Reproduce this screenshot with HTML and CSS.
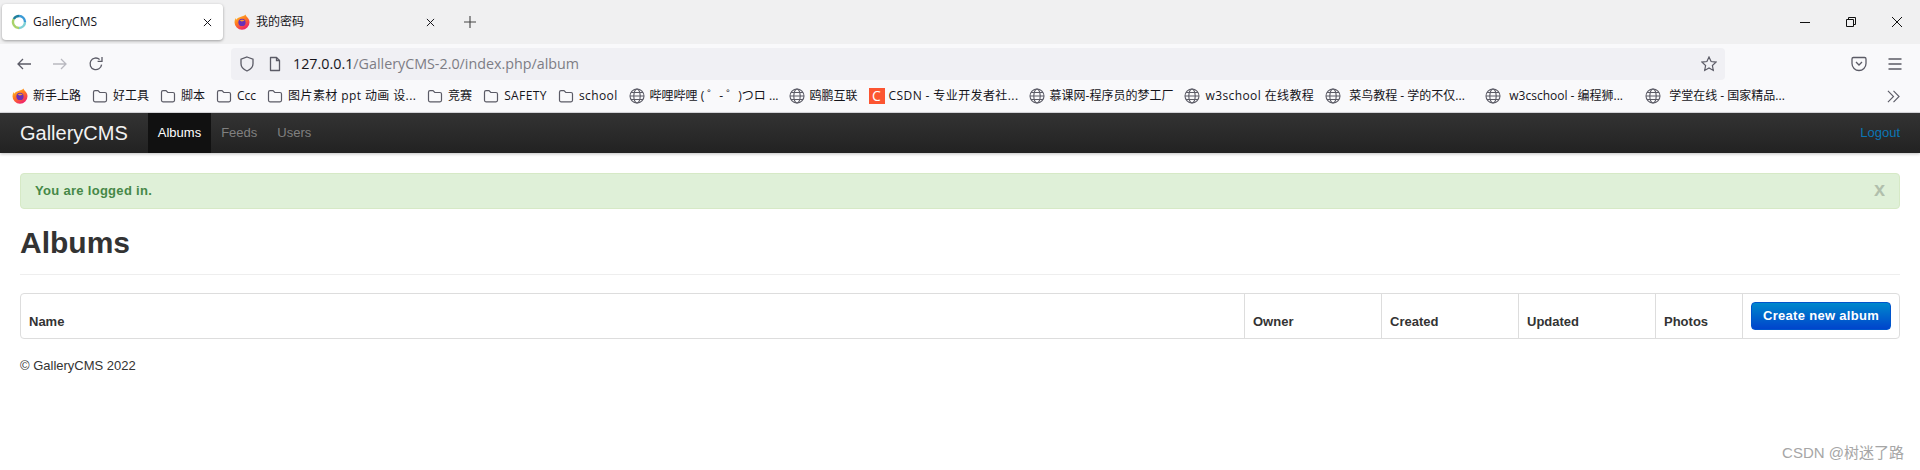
FILE: index.html
```html
<!DOCTYPE html>
<html lang="en">
<head>
<meta charset="UTF-8">
<title>GalleryCMS</title>
<link rel="stylesheet" href="styles.css">
</head>
<body>

<svg class="sprites" aria-hidden="true">
  <defs>
    <linearGradient id="foxFlame" x1="0" y1="0" x2="0.6" y2="1">
      <stop offset="0" stop-color="#ffd52e"/>
      <stop offset="0.5" stop-color="#ff7a1f"/>
      <stop offset="1" stop-color="#f0226a"/>
    </linearGradient>
    <symbol id="i-fox" viewBox="0 0 16 16">
      <path d="M11.5 0.5c0.4 1.4 1.2 2 2.2 3.2 1.4 1.6 1.8 3.2 1.8 4.6a7.5 7.5 0 1 1-15 0c0-1.6 0.4-3 1.2-4.2l0.6 1.6c0.8-1.4 2.2-2.4 4-2.8 1.8-0.4 4-1 5.2-2.4z" fill="url(#foxFlame)"/>
      <circle cx="8" cy="8.4" r="3.6" fill="#6a2fb8"/>
      <path d="M5.6 6.6c1.6-1.2 4-1 5.2 0.6-1.2-0.4-2.2-0.2-3 0.4z" fill="#ff9a2a"/>
    </symbol>
    <symbol id="i-folder" viewBox="0 0 16 16">
      <path d="M1.5 4.2c0-0.9 0.6-1.5 1.5-1.5h3l1.8 1.8H13c0.9 0 1.5 0.6 1.5 1.5v6.3c0 0.9-0.6 1.5-1.5 1.5H3c-0.9 0-1.5-0.6-1.5-1.5z" fill="none" stroke="#5b5b66" stroke-width="1.2"/>
    </symbol>
    <symbol id="i-globe" viewBox="0 0 16 16">
      <g fill="none" stroke="#5b5b66" stroke-width="1.1">
        <circle cx="8" cy="8" r="7"/>
        <ellipse cx="8" cy="8" rx="3.2" ry="7"/>
        <path d="M1 8h14M2 4.5h12M2 11.5h12"/>
      </g>
    </symbol>
  </defs>
</svg>

<div class="tab-strip">
  <div class="tab tab-active">
    <svg class="tab-icon" viewBox="0 0 16 16">
      <g fill="none" stroke-width="2.4">
        <path d="M8 2a6 6 0 0 1 6 6" stroke="#3a9ad6"/>
        <path d="M14 8a6 6 0 0 1-6 6" stroke="#7fd0d6"/>
        <path d="M8 14a6 6 0 0 1-5.2-9" stroke="#a8d26a"/>
        <path d="M2.8 5A6 6 0 0 1 8 2" stroke="#1f7f9c"/>
      </g>
    </svg>
    <span class="tab-title">GalleryCMS</span>
    <svg class="tab-close" viewBox="0 0 10 10"><path d="M1 1l8 8M9 1l-8 8"/></svg>
  </div>
  <div class="tab">
    <svg class="tab-icon"><use href="#i-fox"/></svg>
    <span class="tab-title">我的密码</span>
    <svg class="tab-close" viewBox="0 0 10 10"><path d="M1 1l8 8M9 1l-8 8"/></svg>
  </div>
  <svg class="new-tab" viewBox="0 0 12 12"><path d="M6 0v12M0 6h12"/></svg>
  <div class="window-btns">
    <svg viewBox="0 0 10 10"><path d="M0 5.5h10"/></svg>
    <svg viewBox="0 0 10 10"><path d="M0.5 2.5h7v7h-7zM2.5 2.5v-2h7v7h-2"/></svg>
    <svg viewBox="0 0 10 10"><path d="M0 0l10 10M10 0l-10 10"/></svg>
  </div>
</div>

<div class="toolbar">
  <svg class="tool-icon" viewBox="0 0 16 16"><path d="M15 8H2M7 3L2 8l5 5"/></svg>
  <svg class="tool-icon tool-off" viewBox="0 0 16 16"><path d="M1 8h13M9 3l5 5-5 5"/></svg>
  <svg class="tool-icon" viewBox="0 0 16 16"><path d="M13.6 8.6A5.8 5.8 0 1 1 11.6 3.4M14 1v4.4H9.6"/></svg>
  <div class="urlbar">
    <svg class="url-icon" viewBox="0 0 16 16"><path d="M8 1l6 2.2v4.6c0 3.4-2.6 5.8-6 7.2-3.4-1.4-6-3.8-6-7.2V3.2z"/></svg>
    <svg class="url-icon" viewBox="0 0 16 16"><path d="M3.5 1.5h6l3 3v10h-9z" stroke-linejoin="round"/><path d="M9.5 1.5v3h3" /></svg>
    <span class="url-text"><b>127.0.0.1</b>/GalleryCMS-2.0/index.php/album</span>
    <svg class="url-star" viewBox="0 0 16 16"><path d="M8 1l2.1 4.5 4.9 0.6-3.6 3.4 0.9 4.9L8 11.9l-4.3 2.5 0.9-4.9L1 6.1l4.9-0.6z"/></svg>
  </div>
  <svg class="tool-icon pocket" viewBox="0 0 16 16"><path d="M2.4 1.5h11.2c0.8 0 1.4 0.6 1.4 1.4v4.6a7 7 0 0 1-14 0V2.9c0-0.8 0.6-1.4 1.4-1.4zM5 6l3 3 3-3"/></svg>
  <svg class="tool-icon burger" viewBox="0 0 16 16"><path d="M1.5 3h13M1.5 8h13M1.5 13h13"/></svg>
</div>

<div class="bookmarks">
  <a class="bm"><svg><use href="#i-fox"/></svg>新手上路</a>
  <a class="bm"><svg><use href="#i-folder"/></svg>好工具</a>
  <a class="bm"><svg><use href="#i-folder"/></svg>脚本</a>
  <a class="bm"><svg><use href="#i-folder"/></svg>Ccc</a>
  <a class="bm bm-long bm-latin"><svg><use href="#i-folder"/></svg>图片素材 ppt 动画 设...</a>
  <a class="bm"><svg><use href="#i-folder"/></svg>竞赛</a>
  <a class="bm bm-latin"><svg><use href="#i-folder"/></svg>SAFETY</a>
  <a class="bm bm-latin"><svg><use href="#i-folder"/></svg>school</a>
  <a class="bm bm-long"><svg><use href="#i-globe"/></svg>哔哩哔哩 ( ゜- ゜)つロ ...</a>
  <a class="bm"><svg><use href="#i-globe"/></svg>鸥鹏互联</a>
  <a class="bm bm-long bm-latin"><span class="csdn-icon">C</span>CSDN - 专业开发者社...</a>
  <a class="bm"><svg><use href="#i-globe"/></svg>慕课网-程序员的梦工厂</a>
  <a class="bm bm-latin"><svg><use href="#i-globe"/></svg>w3school 在线教程</a>
  <a class="bm bm-long bm-inset"><svg><use href="#i-globe"/></svg>菜鸟教程 - 学的不仅...</a>
  <a class="bm bm-long bm-inset"><svg><use href="#i-globe"/></svg>w3cschool - 编程狮...</a>
  <a class="bm bm-long bm-inset"><svg><use href="#i-globe"/></svg>学堂在线 - 国家精品...</a>
  <svg class="bm-more" viewBox="0 0 14 14"><path d="M1 1l6 6-6 6M7 1l6 6-6 6"/></svg>
</div>

<nav class="navbar">
  <a class="brand">GalleryCMS</a>
  <ul class="nav-links">
    <li class="active"><a>Albums</a></li>
    <li><a>Feeds</a></li>
    <li><a>Users</a></li>
  </ul>
  <a class="logout">Logout</a>
</nav>

<main class="content">
  <div class="alert">
    <span>You are logged in.</span>
    <span class="alert-close">x</span>
  </div>

  <div class="page-header">
    <h1>Albums</h1>
  </div>

  <table class="albums">
    <thead>
      <tr>
        <th>Name</th>
        <th class="col-date">Owner</th>
        <th class="col-date">Created</th>
        <th class="col-date">Updated</th>
        <th class="col-photos">Photos</th>
        <th class="col-action"><a class="btn-primary">Create new album</a></th>
      </tr>
    </thead>
  </table>

  <footer class="footer">© GalleryCMS 2022</footer>
</main>

<div class="watermark">CSDN @树迷了路</div>

</body>
</html>
```
FILE: styles.css
```css
* {
    box-sizing: border-box;
}

html, body {
    height: 100%;
}

body {
    margin: 0;
    background-color: #fff;
    color: #333;
    font-family: "Liberation Sans", Arial, sans-serif;
    font-size: 13px;
    line-height: 18px;
    overflow: hidden;
    display: flex;
    flex-direction: column;
}

.sprites {
    display: block;
    width: 0;
    height: 0;
}

/* browser chrome */
.tab-strip {
    height: 44px;
    background-color: #f0f0f1;
    display: flex;
    align-items: center;
    padding-left: 2px;
    font-family: "Open Sans", "Noto Sans CJK SC", sans-serif;
    font-size: 12px;
    color: #15141a;
}

.tab {
    width: 221px;
    height: 36px;
    display: flex;
    align-items: center;
    padding: 0 10px 0 9px;
    border-radius: 4px;
}

.tab-active {
    background-color: #fff;
    box-shadow: 0 1px 3px rgba(0, 0, 0, 0.35);
}

.tab + .tab {
    margin-left: 2px;
}

.tab-icon {
    width: 16px;
    height: 16px;
    margin-right: 6px;
    flex: none;
}

.tab-title {
    flex: 1;
}

.tab-close {
    width: 9px;
    height: 9px;
    margin-right: 1px;
    fill: none;
    stroke: #15141a;
    stroke-width: 1.1;
}

.new-tab {
    width: 12px;
    height: 12px;
    margin-left: 18px;
    fill: none;
    stroke: #444;
    stroke-width: 1.1;
}

.window-btns {
    margin-left: auto;
    display: flex;
    gap: 36px;
    padding-right: 18px;
}

.window-btns svg {
    width: 10px;
    height: 10px;
    fill: none;
    stroke: #111;
    stroke-width: 1;
}

.toolbar {
    height: 36px;
    background-color: #f9f9fb;
    display: flex;
    align-items: flex-start;
    padding-top: 4px;
}

.tool-icon {
    width: 16px;
    height: 16px;
    margin: 8px 0 0 16px;
    flex: none;
    fill: none;
    stroke: #5b5b66;
    stroke-width: 1.3;
}

.tool-off {
    margin-left: 20px;
    stroke: #b9b9c0;
}

.tool-icon + .tool-icon:not(.tool-off) {
    margin-left: 20px;
}

.urlbar {
    width: 1494px;
    height: 32px;
    margin-left: 127px;
    background-color: #f0f0f4;
    border-radius: 4px;
    display: flex;
    align-items: center;
    padding: 0 8px;
}

.url-icon {
    width: 16px;
    height: 16px;
    margin-right: 12px;
    fill: none;
    stroke: #5b5b66;
    stroke-width: 1.3;
}

.url-text {
    margin-left: -2px;
    flex: 1;
    font-family: "Open Sans", sans-serif;
    font-size: 14.3px;
    color: #7d7d85;
}

.url-text b {
    font-weight: 400;
    color: #15141a;
}

.url-star {
    width: 16px;
    height: 16px;
    margin-right: 0;
    fill: none;
    stroke: #5b5b66;
    stroke-width: 1.2;
}

.pocket {
    margin-left: 126px;
}

.burger {
    margin-left: 20px;
}

.bookmarks {
    height: 33px;
    background-color: #f9f9fb;
    border-bottom: 1px solid #dcdce0;
    display: flex;
    align-items: center;
    padding-left: 12px;
    font-family: "Open Sans", "Noto Sans CJK SC", sans-serif;
    font-size: 12px;
    color: #15141a;
    white-space: nowrap;
}

.bm {
    display: flex;
    align-items: center;
    gap: 5px;
    margin-right: 11px;
}

/* firefox caps long bookmark labels at a fixed width */
.bm-long {
    width: 149px;
    overflow: hidden;
}

.bm-inset {
    gap: 8px;
}

/* latin labels run a bit wider in the original font */
.bm-latin {
    letter-spacing: 0.4px;
}

.bm svg {
    width: 16px;
    height: 16px;
    flex: none;
}

.csdn-icon {
    width: 16px;
    height: 16px;
    flex: none;
    margin-right: -1px;
    background-color: #fc5531;
    color: #fff;
    font-size: 14px;
    line-height: 16px;
    text-align: center;
}

.bm-more {
    width: 13px;
    height: 13px;
    margin-left: auto;
    margin-right: 20px;
    fill: none;
    stroke: #5b5b66;
    stroke-width: 1.2;
}

/* site navbar */
.navbar {
    height: 40px;
    background-image: linear-gradient(to bottom, #333, #222);
    box-shadow: 0 1px 3px rgba(0, 0, 0, 0.25);
    display: flex;
    align-items: center;
    padding: 0 20px;
}

.brand {
    color: #f2f2f2;
    font-size: 20px;
    margin-right: 20px;
}

.nav-links {
    list-style: none;
    margin: 0;
    padding: 0;
    display: flex;
    align-self: stretch;
}

.nav-links a {
    display: block;
    padding: 11px 10px;
    color: #808080;
}

.nav-links .active a {
    background-color: #111;
    color: #fff;
}

.logout {
    margin-left: auto;
    color: #0b76b5;
}

/* page */
.content {
    padding: 20px 20px 0;
}

.alert {
    display: flex;
    justify-content: space-between;
    align-items: center;
    height: 36px;
    padding: 0 14px;
    margin-bottom: 16px;
    background-color: #dff0d8;
    border: 1px solid #d6e9c6;
    border-radius: 4px;
    color: #468847;
    font-weight: bold;
    letter-spacing: 0.3px;
}

.alert-close {
    margin-bottom: 4px;
    color: #000;
    opacity: 0.2;
    font-size: 20px;
    letter-spacing: 0;
}

.page-header {
    padding-bottom: 13px;
    margin-bottom: 18px;
    border-bottom: 1px solid #eee;
}

.page-header h1 {
    margin: 0;
    font-size: 30px;
    line-height: 36px;
    font-weight: bold;
}

.albums {
    width: 100%;
    table-layout: fixed;
    border-collapse: separate;
    border-spacing: 0;
    border: 1px solid #ddd;
    border-radius: 4px;
}

.albums th {
    padding: 8px 8px 7px;
    text-align: left;
    vertical-align: bottom;
    border-left: 1px solid #ddd;
}

.albums th:first-child {
    border-left: none;
}

.col-date {
    width: 137px;
}

.col-photos {
    width: 87px;
}

.albums .col-action {
    width: 157px;
    padding-bottom: 8px;
}

.btn-primary {
    display: block;
    height: 28px;
    padding: 4px 0;
    text-align: center;
    color: #fff;
    background-image: linear-gradient(to bottom, #0088cc, #0044cc);
    border: 1px solid #0055cc;
    border-radius: 4px;
    font-weight: bold;
    letter-spacing: 0.3px;
}

.footer {
    margin-top: 18px;
}

.watermark {
    position: absolute;
    right: 16px;
    bottom: 8px;
    color: #a6a6a6;
    font-size: 15px;
    font-family: "Liberation Sans", "Noto Sans CJK SC", sans-serif;
}
```
